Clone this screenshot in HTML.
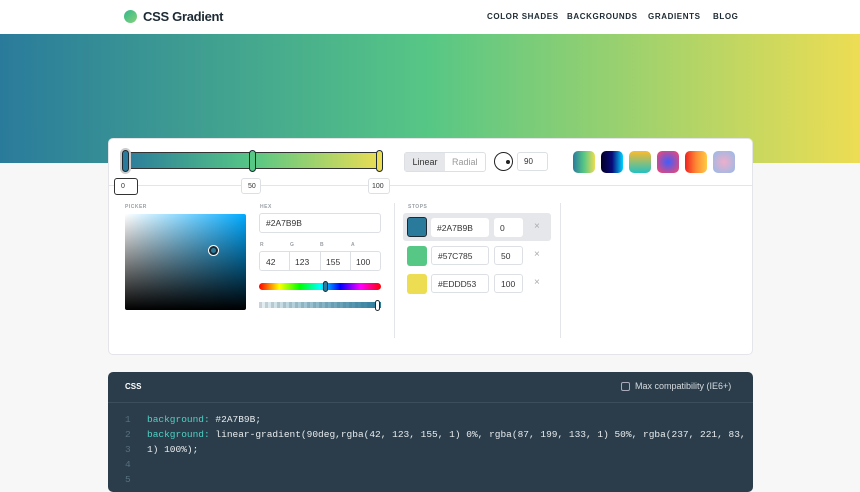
<!DOCTYPE html>
<html><head><style>
*{margin:0;padding:0;box-sizing:border-box}
body{width:860px;height:480px;overflow:hidden;background:#f7f7f8;font-family:"Liberation Sans",sans-serif;position:relative;color:#222}
.a{position:absolute}
.nav{font-size:8px;font-weight:bold;letter-spacing:.6px;color:#1d2a33;top:12px}
.inp{position:absolute;background:#fff;border:1px solid #dcdfe3;border-radius:3px;font-size:9px;color:#333;padding-left:6px;display:flex;align-items:center}
.lbl{position:absolute;font-size:5px;font-weight:bold;color:#9aa0a6;letter-spacing:.5px}
.sw{position:absolute;width:22px;height:22px;border-radius:5px}
.code{font-family:"Liberation Mono",monospace;font-size:9.5px;color:#e8ecef}
.ln{color:#56707f;position:absolute;left:125px}
.k{color:#4fd1c5}
</style></head><body>
<div class="a" style="left:0;top:0;width:860px;height:34px;background:#fff"></div>
<div class="a" style="left:124px;top:10px;width:13px;height:13px;border-radius:50%;background:linear-gradient(135deg,#2fb88a,#8ad17b)"></div>
<div class="a" style="left:143px;top:9px;font-size:13px;font-weight:bold;color:#1d2a33;letter-spacing:-.3px">CSS Gradient</div>
<div class="a nav" style="left:487px">COLOR SHADES</div>
<div class="a nav" style="left:567px">BACKGROUNDS</div>
<div class="a nav" style="left:648px">GRADIENTS</div>
<div class="a nav" style="left:713px">BLOG</div>
<div class="a" style="left:0;top:34px;width:860px;height:129px;background:linear-gradient(90deg,#2a7b9b,#57c785 50%,#eddd53)"></div>

<div class="a" style="left:108px;top:138px;width:645px;height:217px;background:#fff;border:1px solid #e3e5e8;border-radius:5px"></div>
<div class="a" style="left:108px;top:185px;width:645px;height:1px;background:#e3e5e8"></div>
<div class="a" style="left:123px;top:152px;width:260px;height:17px;border:1.5px solid #333;border-radius:3px;background:linear-gradient(90deg,#2a7b9b,#57c785 50%,#eddd53)"></div>
<div class="a" style="left:122px;top:150px;width:7px;height:22px;border:1.5px solid #1d2a33;border-radius:4px;background:#2a7b9b;box-shadow:0 0 0 2px #ccc"></div>
<div class="a" style="left:249px;top:150px;width:7px;height:22px;border:1.5px solid #1d2a33;border-radius:4px;background:#57c785"></div>
<div class="a" style="left:376px;top:150px;width:7px;height:22px;border:1.5px solid #1d2a33;border-radius:4px;background:#eddd53"></div>
<div class="inp" style="left:114px;top:178px;width:24px;height:17px;border:1.5px solid #333;font-size:7px">0</div>
<div class="inp" style="left:241px;top:178px;width:20px;height:16px;font-size:7px">50</div>
<div class="inp" style="left:368px;top:178px;width:22px;height:16px;font-size:7px;padding-left:3px">100</div>
<div class="a" style="left:404px;top:152px;width:82px;height:20px;border:1px solid #dcdfe3;border-radius:3px;background:#fff"></div>
<div class="a" style="left:405px;top:153px;width:40px;height:18px;background:#e5e7eb;font-size:9px;color:#333;text-align:center;line-height:18px">Linear</div>
<div class="a" style="left:452px;top:153px;font-size:9px;color:#999;line-height:18px">Radial</div>
<div class="a" style="left:494px;top:152px;width:19px;height:19px;border:1.5px solid #222;border-radius:50%"></div>
<div class="a" style="left:506px;top:160px;width:4px;height:4px;border-radius:50%;background:#222"></div>
<div class="inp" style="left:517px;top:152px;width:31px;height:19px;font-size:8px">90</div>
<div class="sw" style="left:573px;top:151px;background:linear-gradient(90deg,#2a7b9b,#57c785,#eddd53)"></div>
<div class="sw" style="left:601px;top:151px;background:linear-gradient(90deg,#020024,#090979,#00d4ff)"></div>
<div class="sw" style="left:629px;top:151px;background:linear-gradient(0deg,#22c1c3,#fdbb2d)"></div>
<div class="sw" style="left:657px;top:151px;background:radial-gradient(#3f5efb,#fc466b)"></div>
<div class="sw" style="left:685px;top:151px;background:linear-gradient(90deg,#e22,#f83,#fc4)"></div>
<div class="sw" style="left:713px;top:151px;background:radial-gradient(#eeaeca,#94bbe9)"></div>

<div class="lbl" style="left:125px;top:204px">PICKER</div>
<div class="a" style="left:125px;top:214px;width:121px;height:96px;border-radius:2px;background:linear-gradient(0deg,#000,rgba(0,0,0,0)),linear-gradient(90deg,#fff,#00aaff)"></div>
<div class="a" style="left:209px;top:246px;width:9px;height:9px;border-radius:50%;border:2px solid #1d2a33;background:#2a7b9b;box-shadow:0 0 0 1px #fff"></div>
<div class="lbl" style="left:260px;top:204px">HEX</div>
<div class="inp" style="left:259px;top:213px;width:122px;height:20px;font-size:8.5px">#2A7B9B</div>
<div class="lbl" style="left:260px;top:242px">R</div><div class="lbl" style="left:290px;top:242px">G</div><div class="lbl" style="left:320px;top:242px">B</div><div class="lbl" style="left:351px;top:242px">A</div>
<div class="a" style="left:259px;top:251px;width:122px;height:20px;border:1px solid #dcdfe3;border-radius:3px;display:flex;font-size:8.5px;color:#333;background:#fff">
<div style="width:30px;border-right:1px solid #dcdfe3;padding:5px 6px">42</div><div style="width:31px;border-right:1px solid #dcdfe3;padding:5px 5px">123</div><div style="width:30px;border-right:1px solid #dcdfe3;padding:5px 5px">155</div><div style="padding:5px 5px">100</div></div>
<div class="a" style="left:259px;top:283px;width:122px;height:7px;border-radius:4px;background:linear-gradient(90deg,red,#ff0,lime,cyan,blue,#f0f,red)"></div>
<div class="a" style="left:323px;top:281px;width:5px;height:11px;border:1px solid #1d2a33;border-radius:3px;background:#2a7b9b"></div>
<div class="a" style="left:259px;top:302px;width:122px;height:6px;background:linear-gradient(90deg,rgba(42,123,155,0.1),#2a7b9b),repeating-linear-gradient(90deg,#ddd 0 3px,#fff 3px 6px)"></div>
<div class="a" style="left:375px;top:300px;width:5px;height:11px;border:1px solid #1d2a33;border-radius:3px;background:#fff"></div>
<div class="a" style="left:394px;top:203px;width:1px;height:135px;background:#e3e5e8"></div>
<div class="a" style="left:560px;top:203px;width:1px;height:135px;background:#e3e5e8"></div>
<div class="lbl" style="left:408px;top:204px">STOPS</div>
<div class="a" style="left:403px;top:213px;width:148px;height:28px;background:#e5e7eb;border-radius:3px"></div>
<div class="sw" style="left:407px;top:217px;width:20px;height:20px;background:#2a7b9b;border:1.5px solid #1d2a33;border-radius:3px"></div>
<div class="inp" style="left:431px;top:218px;width:58px;height:19px;border:none;font-size:8.5px">#2A7B9B</div>
<div class="inp" style="left:494px;top:218px;width:29px;height:19px;border:none;font-size:8.5px">0</div>
<div class="a" style="left:534px;top:221px;color:#aaa;font-size:10px">×</div>
<div class="sw" style="left:407px;top:246px;width:20px;height:20px;background:#57c785;border-radius:3px"></div>
<div class="inp" style="left:431px;top:246px;width:58px;height:19px;font-size:8.5px">#57C785</div>
<div class="inp" style="left:494px;top:246px;width:29px;height:19px;font-size:8.5px">50</div>
<div class="a" style="left:534px;top:249px;color:#aaa;font-size:10px">×</div>
<div class="sw" style="left:407px;top:274px;width:20px;height:20px;background:#eddd53;border-radius:3px"></div>
<div class="inp" style="left:431px;top:274px;width:58px;height:19px;font-size:8.5px">#EDDD53</div>
<div class="inp" style="left:494px;top:274px;width:29px;height:19px;font-size:8.5px">100</div>
<div class="a" style="left:534px;top:277px;color:#aaa;font-size:10px">×</div>

<div class="a" style="left:108px;top:372px;width:645px;height:120px;background:#2b3d4a;border-radius:5px"></div>
<div class="a" style="left:108px;top:402px;width:645px;height:1px;background:#3a4e5c"></div>
<div class="a" style="left:125px;top:382px;font-size:8px;font-weight:bold;color:#fff">CSS</div>
<div class="a" style="left:621px;top:382px;width:9px;height:9px;border:1px solid #aab;border-radius:2px"></div>
<div class="a" style="left:635px;top:381px;font-size:9px;color:#d5dbe0">Max compatibility (IE6+)</div>
<div class="a code" style="top:412px;left:0;line-height:15px;width:860px">
<div><span class="ln">1</span><span style="margin-left:147px"><span class="k">background:</span> #2A7B9B;</span></div>
<div><span class="ln">2</span><span style="margin-left:147px"><span class="k">background:</span> linear-gradient(90deg,rgba(42, 123, 155, 1) 0%, rgba(87, 199, 133, 1) 50%, rgba(237, 221, 83,</span></div>
<div><span class="ln">3</span><span style="margin-left:147px">1) 100%);</span></div>
<div><span class="ln">4</span>&nbsp;</div>
<div><span class="ln">5</span>&nbsp;</div>
</div>
</body></html>
